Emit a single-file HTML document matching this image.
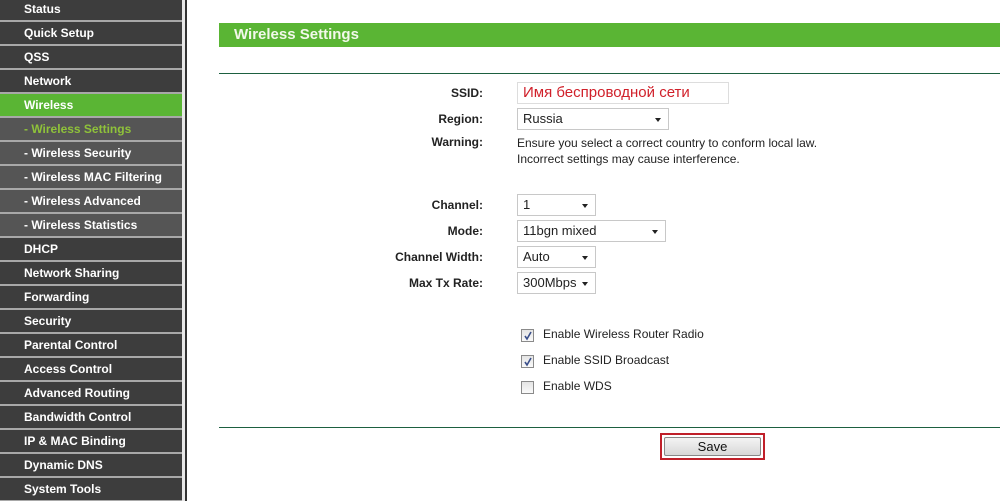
<!DOCTYPE html>
<html><head><meta charset="utf-8"><style>
*{margin:0;padding:0;box-sizing:border-box}
body{width:1000px;height:501px;overflow:hidden;background:#fff;font-family:"Liberation Sans",Arial,sans-serif;position:relative}
.side{position:absolute;left:0;top:0;width:182px;height:501px;background:#a8a8a8}
.it{position:absolute;left:0;width:182px;height:22px;background:#3d3d3d;color:#fff;font-weight:bold;font-size:12px;line-height:22px;padding-left:24px}
.sub{background:#555}
.act{background:#5ab534}
.g{color:#8fc23a}
.vb{position:absolute;left:182px;top:0;width:3px;height:501px;background:#e8e8e8}
.vl{position:absolute;left:185px;top:0;width:2px;height:501px;background:#333}
.lbl{position:absolute;right:517px;font-weight:bold;font-size:12px;color:#222;text-align:right}
.sel{position:absolute;left:517px;height:22px;border:1px solid #c8c8c8;background:#fff;font-size:13px;line-height:20px;padding-left:5px;color:#222}
.sel:after{content:"";position:absolute;right:7px;top:9px;border-left:3px solid transparent;border-right:3px solid transparent;border-top:4px solid #222}
.t{position:absolute;font-size:12px;color:#222}
.cb{position:absolute;left:521px;width:13px;height:13px;border:1px solid #8a8a8a;background:linear-gradient(#e4e4e4,#fafafa)}
.cb svg{position:absolute;left:1px;top:1px}
</style></head><body>
<div class="side">
<div class="it" style="top:-2px">Status</div>
<div class="it" style="top:22px">Quick Setup</div>
<div class="it" style="top:46px">QSS</div>
<div class="it" style="top:70px">Network</div>
<div class="it act" style="top:94px">Wireless</div>
<div class="it sub g" style="top:118px">- Wireless Settings</div>
<div class="it sub" style="top:142px">- Wireless Security</div>
<div class="it sub" style="top:166px">- Wireless MAC Filtering</div>
<div class="it sub" style="top:190px">- Wireless Advanced</div>
<div class="it sub" style="top:214px">- Wireless Statistics</div>
<div class="it" style="top:238px">DHCP</div>
<div class="it" style="top:262px">Network Sharing</div>
<div class="it" style="top:286px">Forwarding</div>
<div class="it" style="top:310px">Security</div>
<div class="it" style="top:334px">Parental Control</div>
<div class="it" style="top:358px">Access Control</div>
<div class="it" style="top:382px">Advanced Routing</div>
<div class="it" style="top:406px">Bandwidth Control</div>
<div class="it" style="top:430px">IP &amp; MAC Binding</div>
<div class="it" style="top:454px">Dynamic DNS</div>
<div class="it" style="top:478px">System Tools</div>
</div>
<div class="vb"></div><div class="vl"></div>
<div style="position:absolute;left:219px;top:23px;width:781px;height:24px;background:#5ab534;color:#f2f8ea;font-weight:bold;font-size:15px;line-height:24px;padding-left:15px">Wireless Settings</div>
<div style="position:absolute;left:219px;top:73px;width:781px;height:1px;background:#1d6040"></div>
<div style="position:absolute;left:219px;top:427px;width:781px;height:1px;background:#1d6040"></div>

<div class="lbl" style="top:86px">SSID:</div>
<div style="position:absolute;left:517px;top:82px;width:212px;height:22px;border:1px solid #ddd;color:#d0202a;font-size:15px;line-height:20px;padding-left:5px;font-family:'Liberation Sans','DejaVu Sans',sans-serif">Имя беспроводной сети</div>
<div class="lbl" style="top:112px">Region:</div>
<div class="sel" style="top:108px;width:152px">Russia</div>
<div class="lbl" style="top:135px">Warning:</div>
<div class="t" style="left:517px;top:135px;line-height:16px">Ensure you select a correct country to conform local law.<br>Incorrect settings may cause interference.</div>
<div class="lbl" style="top:198px">Channel:</div>
<div class="sel" style="top:194px;width:79px">1</div>
<div class="lbl" style="top:224px">Mode:</div>
<div class="sel" style="top:220px;width:149px">11bgn mixed</div>
<div class="lbl" style="top:250px">Channel Width:</div>
<div class="sel" style="top:246px;width:79px">Auto</div>
<div class="lbl" style="top:276px">Max Tx Rate:</div>
<div class="sel" style="top:272px;width:79px">300Mbps</div>

<div class="cb" style="top:329px"><svg width="10" height="10"><path d="M2 5 L4 8 L8 1" stroke="#3a4f8a" stroke-width="1.6" fill="none"/></svg></div>
<div class="t" style="left:543px;top:327px">Enable Wireless Router Radio</div>
<div class="cb" style="top:355px"><svg width="10" height="10"><path d="M2 5 L4 8 L8 1" stroke="#3a4f8a" stroke-width="1.6" fill="none"/></svg></div>
<div class="t" style="left:543px;top:353px">Enable SSID Broadcast</div>
<div class="cb" style="top:381px"></div>
<div class="t" style="left:543px;top:379px">Enable WDS</div>

<div style="position:absolute;left:660px;top:433px;width:105px;height:27px;border:2px solid #c0202a;background:#fff;padding:2px">
<div style="width:97px;height:19px;border:1px solid #888;border-radius:2px;background:linear-gradient(#f4f4f4,#d8d8d8);text-align:center;font-size:13px;line-height:17px;color:#111">Save</div>
</div>
</body></html>
